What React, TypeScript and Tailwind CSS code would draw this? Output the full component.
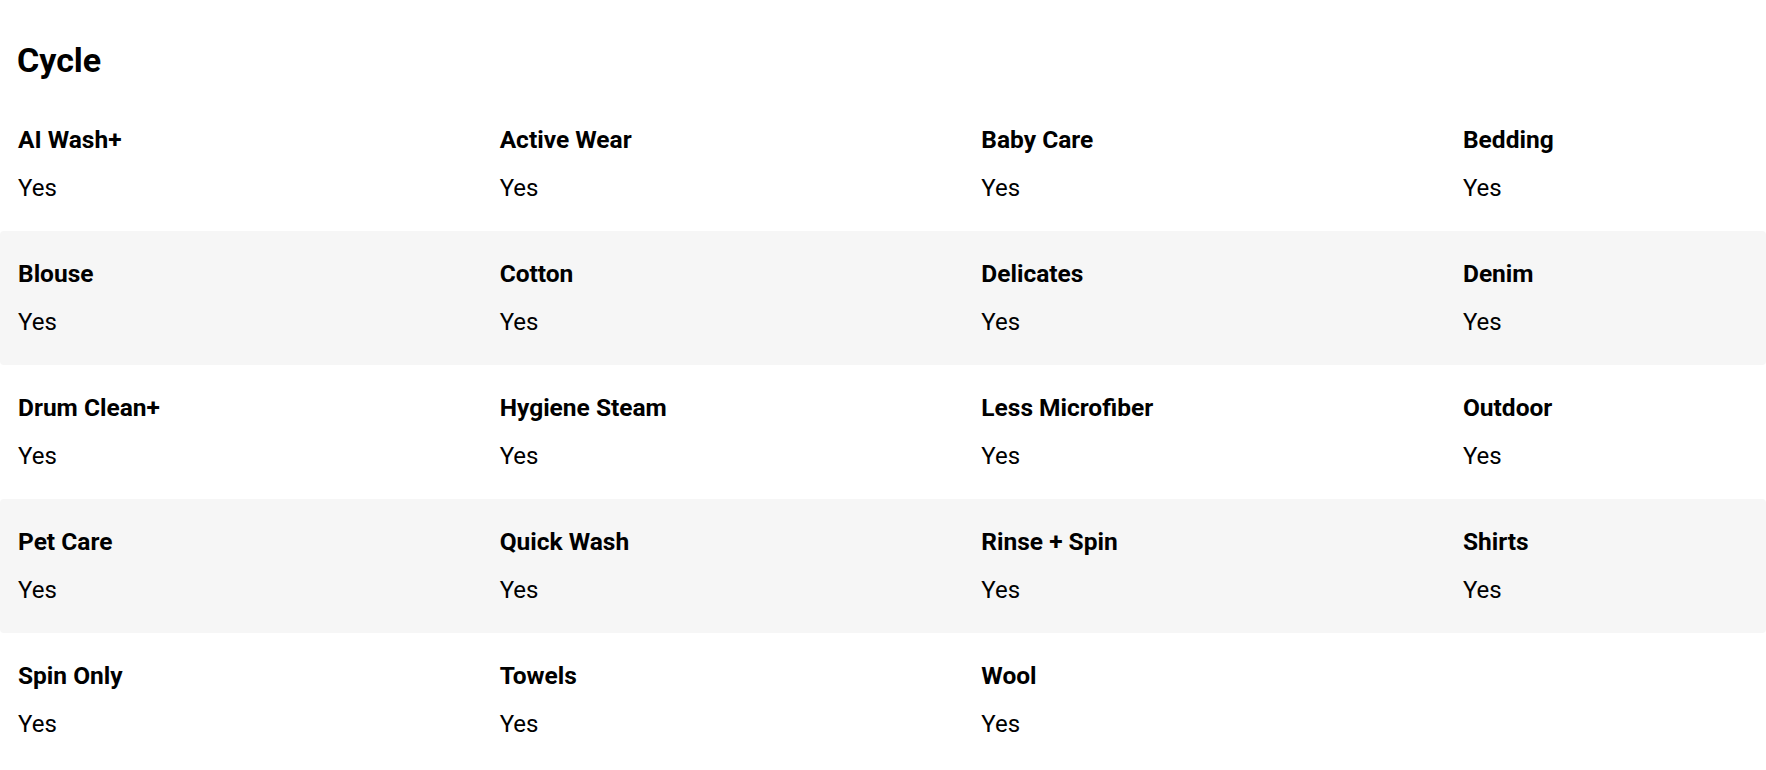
import React from 'react';

const cycles: string[] = [
    'AI Wash+',
    'Active Wear',
    'Baby Care',
    'Bedding',
    'Blouse',
    'Cotton',
    'Delicates',
    'Denim',
    'Drum Clean+',
    'Hygiene Steam',
    'Less Microfiber',
    'Outdoor',
    'Pet Care',
    'Quick Wash',
    'Rinse + Spin',
    'Shirts',
    'Spin Only',
    'Towels',
    'Wool',
];

const chunk = <T,>(items: T[], size: number): T[][] => {
    const rows: T[][] = [];
    for (let i = 0; i < items.length; i += size) {
        rows.push(items.slice(i, i + size));
    }
    return rows;
};

const SpecRow: React.FC<{ items: string[]; shaded: boolean }> = ({ items, shaded }) => (
    <div className={`h-[134px] rounded-[4px] ${shaded ? 'bg-[#f6f6f6]' : 'bg-white'}`}>
        <div className="grid grid-cols-[repeat(4,481.67px)] pl-[18px] pt-[27px]">
            {items.map((name) => (
                <div key={name} className="flex flex-col gap-4">
                    <span className="text-[24.5px] leading-8 font-bold">{name}</span>
                    <span className="text-[24px] leading-8">Yes</span>
                </div>
            ))}
        </div>
    </div>
);

export default function App() {
    const rows = chunk(cycles, 4);

    return (
        <div className="w-full min-h-[770px] overflow-hidden bg-white text-black font-['Roboto',sans-serif]">
            <h2 className="pl-[17px] pt-[40px] text-[34px] leading-10 font-bold">Cycle</h2>
            <div className="mt-[17px] flex flex-col">
                {rows.map((row, i) => (
                    <SpecRow key={i} items={row} shaded={i % 2 === 1} />
                ))}
            </div>
        </div>
    );
}
